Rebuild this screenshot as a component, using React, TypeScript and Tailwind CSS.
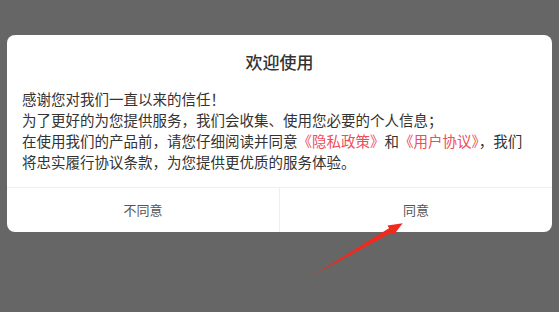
const App = () => {
    return (
        <div
            className="relative w-[559px] h-[312px] bg-[#666666] px-[7px] pt-[35px] overflow-hidden"
            style={{ fontFamily: '"Noto Sans CJK SC", "Noto Sans", sans-serif' }}
        >
            {/* Dialog */}
            <div className="bg-white rounded-[8px] overflow-hidden">
                <div className="pt-[15px] text-center text-[17px] leading-[24px] font-medium text-[#333333]">
                    欢迎使用
                </div>
                <div className="pt-[14px] pb-[15px] pl-[15px] pr-[10px] text-[14.5px] leading-[21px] text-[#333333] whitespace-nowrap">
                    <div>感谢您对我们一直以来的信任！</div>
                    <div>为了更好的为您提供服务，我们会收集、使用您必要的个人信息；</div>
                    <div>
                        在使用我们的产品前，请您仔细阅读并同意
                        <span className="text-[#ee4d5a]">《隐私政策》</span>和
                        <span className="text-[#ee4d5a]">《用户协议》</span>，我们
                    </div>
                    <div>将忠实履行协议条款，为您提供更优质的服务体验。</div>
                </div>
                <div className="flex h-[45px] border-t border-[#eeeeee] text-[13px] text-[#555555]">
                    <button className="flex-1 flex items-center justify-center border-r border-[#eeeeee]">
                        不同意
                    </button>
                    <button className="flex-1 flex items-center justify-center">同意</button>
                </div>
            </div>

            {/* Annotation arrow */}
            <svg className="absolute left-0 top-0 pointer-events-none" width="559" height="312" viewBox="0 0 559 312">
                <defs>
                    <linearGradient id="shaft" x1="307" y1="279" x2="400" y2="225" gradientUnits="userSpaceOnUse">
                        <stop offset="0" stopColor="#e8261c" stopOpacity="0.3" />
                        <stop offset="0.35" stopColor="#ee2a1e" />
                        <stop offset="1" stopColor="#f2291d" />
                    </linearGradient>
                </defs>
                <polygon points="306.5,279 391.8,226.6 394.6,231" fill="url(#shaft)" />
                <polygon points="402.7,223.3 387.5,225.4 393.5,235.3" fill="#f2291d" />
            </svg>
        </div>
    );
};

export default App;
